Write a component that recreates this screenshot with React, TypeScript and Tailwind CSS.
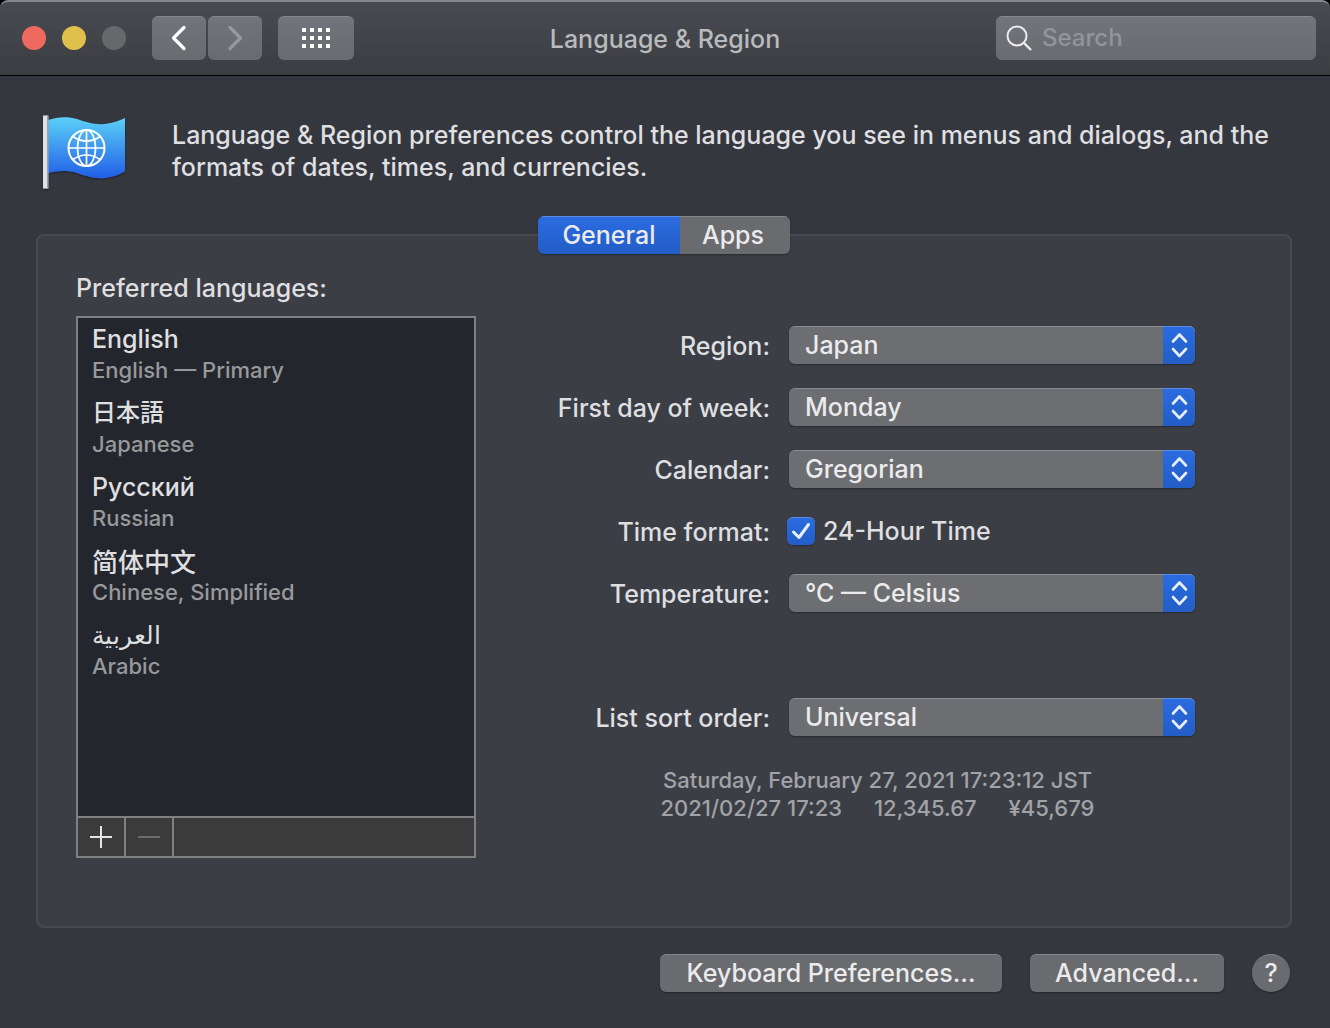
import React, { useState } from 'react';

interface Language {
  name: string;
  detail: string;
  lang: string;
  size?: string;
}

interface SelectRowProps {
  id: string;
  label: string;
  options: string[];
}

const languages: Language[] = [
  { name: 'English', detail: 'English — Primary', lang: 'en' },
  { name: '日本語', detail: 'Japanese', lang: 'ja', size: 'text-[24px]' },
  { name: 'Русский', detail: 'Russian', lang: 'ru' },
  { name: '简体中文', detail: 'Chinese, Simplified', lang: 'zh-Hans', size: "font-['Noto_Sans_CJK_SC',sans-serif] text-[26px]" },
  { name: 'العربية', detail: 'Arabic', lang: 'ar' },
];

function FlagIcon() {
  return (
    <svg width="92" height="80" viewBox="0 0 92 80" className="shrink-0" aria-hidden="true">
      <defs>
        <linearGradient id="flag" x1="0" y1="0" x2="0" y2="1">
          <stop offset="0" stopColor="#5bd0f8" />
          <stop offset="1" stopColor="#215ee6" />
        </linearGradient>
        <filter id="flag-shadow" x="-10%" y="-10%" width="120%" height="130%">
          <feDropShadow dx="0" dy="1" stdDeviation="1" floodColor="#000" floodOpacity="0.45" />
        </filter>
      </defs>
      <g filter="url(#flag-shadow)">
        <path
          d="M8 6C17 3 27 2 37 5C46 8 54 11 65 10C73 9 79 7 85 4V57C79 61 73 63 65 64C54 65 46 62 37 59C27 56 17 57 8 59Z"
          fill="url(#flag)"
        />
        <rect x="3" y="1.500" width="5" height="73" fill="#dfe2e5" />
        <rect x="7" y="1.500" width="1.600" height="73" fill="#96a3ae" />
      </g>
      <g fill="none" stroke="#fff" strokeWidth="1.700">
        <circle cx="46.500" cy="34" r="18" strokeWidth="2" />
        <ellipse cx="46.500" cy="34" rx="9" ry="18" />
        <path d="M46.500 16V52M28.500 34H64.500" />
        <path d="M33 22.500C41 28.500 52 28.500 60 22.500M33 45.500C41 39.500 52 39.500 60 45.500" />
      </g>
    </svg>
  );
}

function SelectRow({ id, label, options }: SelectRowProps) {
  return (
    <>
      <label htmlFor={id} className="pt-0.5 text-right leading-9">
        {label}
      </label>
      <div className="relative h-[38px] rounded-md shadow-[0_1px_2px_rgba(0,0,0,0.35)]">
        <select
          id={id}
          className="h-full w-full appearance-none rounded-md border-t border-[#8a8c8f] bg-[#6c6e72] pr-10 pl-4 text-[#ebebec] outline-none"
        >
          {options.map((option) => (
            <option key={option}>{option}</option>
          ))}
        </select>
        <span className="pointer-events-none absolute inset-y-0 right-0 flex w-8 items-center justify-center rounded-r-md border-t border-[#5c8ee6] bg-linear-to-b from-[#2a6ce0] to-[#235dc6] pb-px">
          <svg width="18" height="28" viewBox="0 0 18 28" fill="none" stroke="#e9effb" strokeWidth="2.600" strokeLinecap="round" strokeLinejoin="round">
            <path d="M3 10.500L9.500 3.500L16 10.500M3 18L9.500 25L16 18" />
          </svg>
        </span>
      </div>
    </>
  );
}

export default function App() {
  const [tab, setTab] = useState('General');
  const [use24Hour, setUse24Hour] = useState(true);

  const toolbarButton =
    'flex h-11 items-center justify-center rounded-md border-t border-[#85888e] bg-linear-to-b from-[#71747b] to-[#696b6f]';
  const pushButton =
    'h-[38px] rounded-md border-t border-[#85878a] bg-[#696b6f] text-[#ebebec] shadow-[0_1px_2px_rgba(0,0,0,0.35)]';

  return (
    <div className="min-h-screen bg-black">
      <div className="flex min-h-screen flex-col overflow-hidden rounded-t-lg bg-[#35373f] font-['Inter','Noto_Sans_CJK_JP','Noto_Sans',sans-serif] text-[25px] font-medium text-[#dfdfe0]">
        <header className="grid h-[76px] grid-cols-[1fr_auto_1fr] items-center rounded-t-lg border-t-2 border-b border-t-[#85878a] border-b-black bg-linear-to-b from-[#484b52] to-[#3b3d41] px-3.5 pb-0.5">
          <div className="flex items-center pl-2">
            <div className="flex gap-4">
              <button aria-label="Close" className="size-6 rounded-full bg-[#ee6a5f]" />
              <button aria-label="Minimize" className="size-6 rounded-full bg-[#e0c04c]" />
              <button aria-label="Zoom" disabled className="size-6 rounded-full bg-[#66686c]" />
            </div>
            <div className="ml-[26px] flex gap-0.5">
              <button aria-label="Back" className={`${toolbarButton} w-[54px]`}>
                <svg width="16" height="26" viewBox="0 0 16 26" fill="none" stroke="#fff" strokeWidth="3.200" strokeLinecap="round" strokeLinejoin="round">
                  <path d="M13 2.500L2.500 13L13 23.500" />
                </svg>
              </button>
              <button aria-label="Forward" disabled className={`${toolbarButton} w-[54px]`}>
                <svg width="16" height="26" viewBox="0 0 16 26" fill="none" stroke="#97999d" strokeWidth="3.200" strokeLinecap="round" strokeLinejoin="round">
                  <path d="M3 2.500L13.500 13L3 23.500" />
                </svg>
              </button>
            </div>
            <button aria-label="Show All" className={`${toolbarButton} ml-4 w-[76px]`}>
              <svg width="28" height="20" viewBox="0 0 28 20" fill="#fff">
                {[0, 8, 16].map((y) =>
                  [0, 8, 16, 24].map((x) => <rect key={`${x}-${y}`} x={x} y={y} width="4" height="4" />)
                )}
              </svg>
            </button>
          </div>

          <h1 className="pt-1 text-[#b9babc]">Language &amp; Region</h1>

          <label className="flex h-11 w-80 items-center gap-2.5 justify-self-end rounded-md border-t border-[#85888e] bg-linear-to-b from-[#71747b] to-[#696b6f] pl-2.5">
            <svg width="26" height="26" viewBox="0 0 26 26" fill="none" stroke="#ececed" strokeWidth="2" className="shrink-0">
              <circle cx="11" cy="11" r="9.500" />
              <path d="M17.500 17.500L25 25" strokeWidth="2.400" />
            </svg>
            <input
              type="search"
              aria-label="Search"
              placeholder="Search"
              className="w-full min-w-0 bg-transparent text-[24px] outline-none placeholder:text-[#939599]"
            />
          </label>
        </header>

        <section className="flex items-start gap-10 px-10 pt-[38px]">
          <FlagIcon />
          <p className="pt-[5px] leading-8">
            Language &amp; Region preferences control the language you see in menus and dialogs, and the formats of
            dates, times, and currencies.
          </p>
        </section>

        <main className="mr-[38px] ml-9 flex flex-1 flex-col pt-[22px]">
          <div className="z-10 flex justify-center">
            <div className="flex h-[38px] overflow-hidden rounded-md text-[#ebebec] shadow-[0_1px_2px_rgba(0,0,0,0.35)]">
              <button
                onClick={() => setTab('General')}
                className={`w-[142px] border-t ${
                  tab === 'General'
                    ? 'border-[#5c8ee6] bg-linear-to-b from-[#2a6ce0] to-[#235dc6]'
                    : 'border-[#85878a] bg-[#696b6f]'
                }`}
              >
                General
              </button>
              <button
                onClick={() => setTab('Apps')}
                className={`w-[110px] border-t pr-1 ${
                  tab === 'Apps'
                    ? 'border-[#5c8ee6] bg-linear-to-b from-[#2a6ce0] to-[#235dc6]'
                    : 'border-[#85878a] bg-[#696b6f]'
                }`}
              >
                Apps
              </button>
            </div>
          </div>

          <div className="-mt-5 flex flex-1 rounded-lg border-2 border-[#484a50] bg-[#3c3e46] px-[38px] pt-8 pb-[68px]">
            <div className="flex w-[400px] shrink-0 flex-col">
              <h2 className="pt-0.5 leading-9">Preferred languages:</h2>
              <div className="mt-2.5 flex flex-1 flex-col border-2 border-[#808080] bg-[#24262d]">
                <ul className="flex-1 px-3.5 pt-[5px]">
                  {languages.map((language) => (
                    <li key={language.lang} className="pb-3">
                      <div lang={language.lang} className={`h-8 leading-8 ${language.size ?? ''}`}>
                        {language.name}
                      </div>
                      <div className="text-[22px] leading-[30px] text-[#98999b]">{language.detail}</div>
                    </li>
                  ))}
                </ul>
                <div className="flex h-10 border-t-2 border-[#808080] bg-[#3b3b3b]">
                  <button aria-label="Add language" className="flex w-12 items-center justify-center border-r-2 border-[#808080]">
                    <svg width="22" height="22" viewBox="0 0 22 22" stroke="#e4e4e4" strokeWidth="2">
                      <path d="M11 0V22M0 11H22" />
                    </svg>
                  </button>
                  <button aria-label="Remove language" disabled className="flex w-12 items-center justify-center border-r-2 border-[#808080]">
                    <svg width="22" height="22" viewBox="0 0 22 22" stroke="#6c6c6c" strokeWidth="2">
                      <path d="M0 11H22" />
                    </svg>
                  </button>
                </div>
              </div>
            </div>

            <div className="flex-1 pt-[58px] pr-[57px]">
              <form className="grid grid-cols-[294px_minmax(0,1fr)] gap-x-[19px] gap-y-6">
                <SelectRow id="region" label="Region:" options={['Japan', 'United States', 'Russia']} />
                <SelectRow id="first-day" label="First day of week:" options={['Monday', 'Saturday', 'Sunday']} />
                <SelectRow id="calendar" label="Calendar:" options={['Gregorian', 'Japanese', 'Buddhist']} />

                <span className="pt-0.5 text-right leading-9">Time format:</span>
                <label className="-ml-0.5 flex h-[38px] items-center gap-2">
                  <span className="relative flex size-7">
                    <input
                      type="checkbox"
                      checked={use24Hour}
                      onChange={(e) => setUse24Hour(e.target.checked)}
                      className="peer size-7 appearance-none rounded-md border-t border-[#85878a] bg-[#696b6f] shadow-[0_1px_2px_rgba(0,0,0,0.35)] checked:border-[#5c8ee6] checked:bg-linear-to-b checked:from-[#2a6ce0] checked:to-[#235dc6]"
                    />
                    <svg
                      viewBox="0 0 28 28"
                      fill="none"
                      stroke="#e9effb"
                      strokeWidth="3"
                      strokeLinecap="round"
                      strokeLinejoin="round"
                      className="pointer-events-none absolute inset-0 hidden peer-checked:block"
                    >
                      <path d="M6.500 15L12 20.500L21.500 7.500" />
                    </svg>
                  </span>
                  <span className="pt-0.5">24-Hour Time</span>
                </label>

                <SelectRow id="temperature" label="Temperature:" options={['°C — Celsius', '°F — Fahrenheit']} />
                <div className="col-span-2 h-[38px]" />
                <SelectRow id="sort-order" label="List sort order:" options={['Universal', 'Japanese']} />
              </form>

              <div className="mt-[30px] ml-[84px] text-center text-[22px] leading-7 text-[#a2a3a6]">
                <p>Saturday, February 27, 2021 17:23:12 JST</p>
                <p className="flex justify-center gap-8">
                  <span>2021/02/27 17:23</span>
                  <span>12,345.67</span>
                  <span>¥45,679</span>
                </p>
              </div>
            </div>
          </div>
        </main>

        <footer className="flex justify-end gap-7 px-10 pt-[26px] pb-9">
          <button className={`${pushButton} w-[342px]`}>Keyboard Preferences…</button>
          <button className={`${pushButton} w-[194px]`}>Advanced…</button>
          <button
            aria-label="Help"
            className="size-[38px] rounded-full border-t border-[#85878a] bg-[#696b6f] text-[#ebebec] shadow-[0_1px_2px_rgba(0,0,0,0.35)]"
          >
            ?
          </button>
        </footer>
      </div>
    </div>
  );
}
